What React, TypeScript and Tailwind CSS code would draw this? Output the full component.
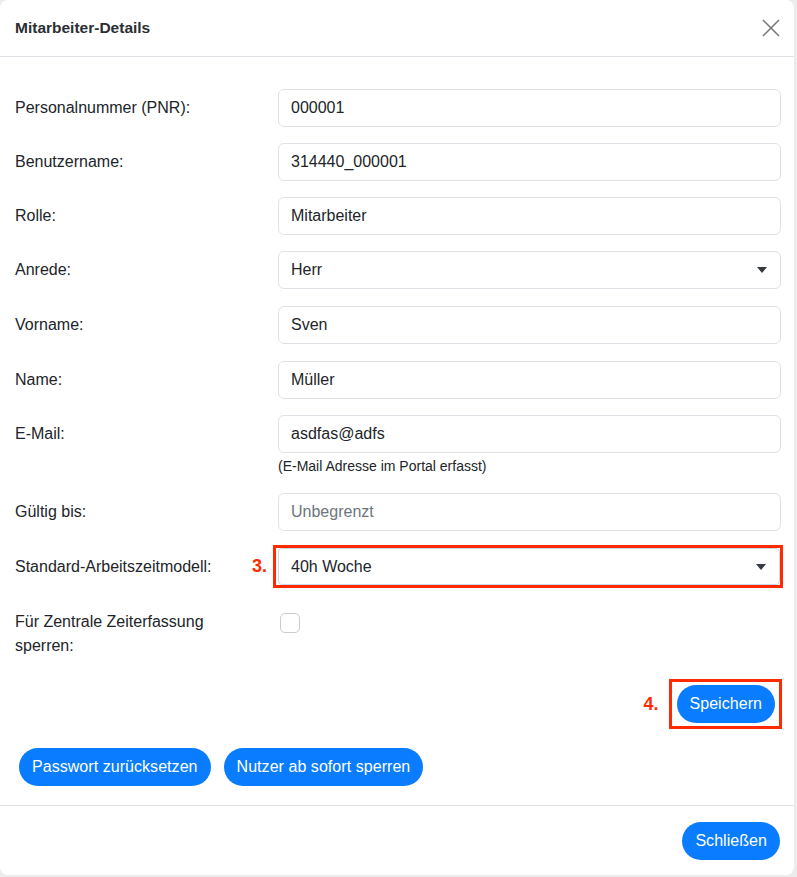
const font = { fontFamily: '"Liberation Sans", Arial, sans-serif' }

function Field({ label, value, muted, className = "" }: { label: string; value: string; muted?: boolean; className?: string }) {
  return (
    <div className={"flex items-center h-[38px] " + className}>
      <div className="w-[263px] text-[16px] text-[#212529]">{label}</div>
      <div className={"flex-1 h-[38px] border border-[#dee2e6] rounded-[6px] px-3 flex items-center text-[16px] " + (muted ? "text-[#6c757d]" : "text-[#212529]")}>
        {value}
      </div>
    </div>
  )
}

function Caret() {
  return <svg width="10" height="6" viewBox="0 0 10 6"><path d="M0 0h10L5 6z" fill="#343a40" /></svg>
}

function Pill({ children }: { children: string }) {
  return (
    <button className="h-[38px] px-[13px] rounded-full bg-[#0a7cff] text-white text-[16px] tracking-[0.05px] whitespace-nowrap">{children}</button>
  )
}

export default function App() {
  return (
    <div className="w-[797px] h-[877px] bg-[#ececec]" style={font}>
      <div className="w-[794px] h-[875px] bg-white rounded-[8px] flex flex-col overflow-hidden">
        <div className="h-[57px] border-b border-[#dee2e6] flex items-center justify-between pl-[15px] pr-[14px] shrink-0">
          <h1 className="text-[15.5px] font-bold text-[#2b2f33]">Mitarbeiter-Details</h1>
          <svg width="18" height="18" viewBox="0 0 18 18"><path d="M1 1l16 16M17 1L1 17" stroke="#7a7a7a" strokeWidth="1.6" /></svg>
        </div>

        <div className="pl-[15px] pr-[13px] pt-[32px] pb-[19px]">
          <Field label="Personalnummer (PNR):" value="000001" />
          <Field className="mt-[16px]" label="Benutzername:" value="314440_000001" />
          <Field className="mt-[16px]" label="Rolle:" value="Mitarbeiter" />
          <div className="flex items-center h-[38px] mt-[16px]">
            <div className="w-[263px] text-[16px] text-[#212529]">Anrede:</div>
            <div className="flex-1 h-[38px] border border-[#dee2e6] rounded-[6px] pl-3 pr-[13px] flex items-center justify-between text-[16px] text-[#212529]">
              <span>Herr</span>
              <Caret />
            </div>
          </div>
          <Field className="mt-[17px]" label="Vorname:" value="Sven" />
          <Field className="mt-[17px]" label="Name:" value="Müller" />
          <Field className="mt-[16px]" label="E-Mail:" value="asdfas@adfs" />
          <div className="pl-[263px] mt-[5px] h-[17px] leading-[17px] text-[14px] text-[#212529]">(E-Mail Adresse im Portal erfasst)</div>
          <Field className="mt-[18px]" label="Gültig bis:" value="Unbegrenzt" muted />

          <div className="flex items-center h-[43px] mt-[14px]">
            <div className="w-[263px] flex items-center justify-between pr-[11px]">
              <span className="text-[16px] text-[#212529]">Standard-Arbeitszeitmodell:</span>
              <span className="text-[18px] font-bold text-[#ff2a00]">3.</span>
            </div>
            <div className="flex-1 h-[43px] -ml-[5px] -mr-[2px] border-[3px] border-[#ff2a00] pl-[2px]">
              <div className="h-[37px] border border-[#cdd8ea] rounded-[4px] pl-[12px] pr-[13px] flex items-center justify-between text-[16px] text-[#212529]">
                <span>40h Woche</span>
                <Caret />
              </div>
            </div>
          </div>

          <div className="flex items-start mt-[22px]">
            <div className="w-[263px] text-[16px] text-[#212529] leading-[24px]">Für Zentrale Zeiterfassung<br />sperren:</div>
            <div className="w-[20px] h-[20px] mt-[3px] ml-[2px] border border-[#c8ccd2] rounded-[5px]" />
          </div>

          <div className="flex justify-end items-center mt-[21px] -mr-[1px]">
            <span className="text-[18px] font-bold text-[#ff2a00] mr-[10px]">4.</span>
            <div className="border-[3px] border-[#ff2a00] pl-[5px] pr-[4px] py-[3px]">
              <Pill>Speichern</Pill>
            </div>
          </div>

          <div className="flex gap-[13px] mt-[19px] pl-[4px]">
            <Pill>Passwort zurücksetzen</Pill>
            <Pill>Nutzer ab sofort sperren</Pill>
          </div>
        </div>

        <div className="flex-1 border-t border-[#dee2e6] flex items-start justify-end pr-[14px] pt-[16px]">
          <Pill>Schließen</Pill>
        </div>
      </div>
    </div>
  )
}
